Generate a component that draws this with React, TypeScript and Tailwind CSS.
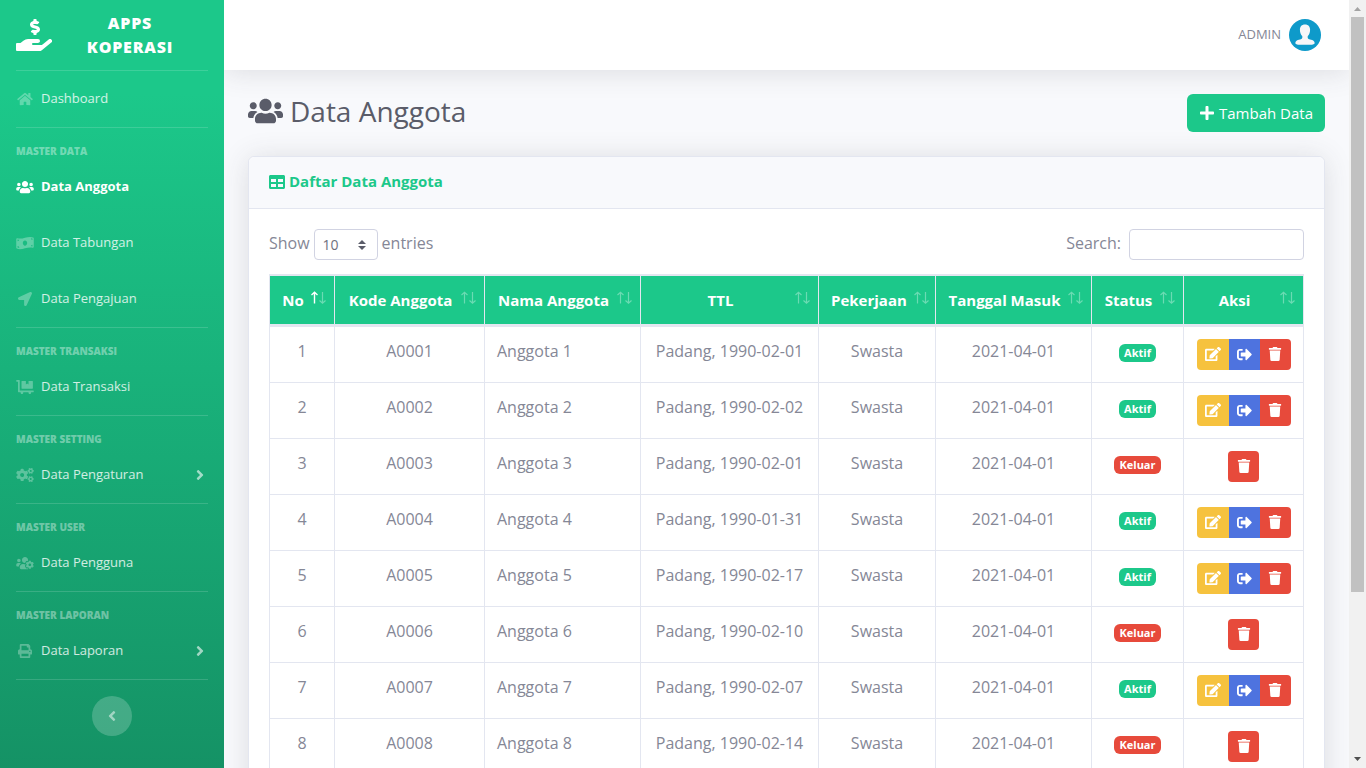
import type { ReactNode } from "react";
import type { IconType } from "react-icons";
import {
  FaAngleLeft,
  FaAngleRight,
  FaCogs,
  FaDollyFlatbed,
  FaEdit,
  FaHandHoldingUsd,
  FaHome,
  FaLocationArrow,
  FaMoneyBillWave,
  FaPlus,
  FaPrint,
  FaSignOutAlt,
  FaTable,
  FaTrash,
  FaUsers,
  FaUsersCog
} from "react-icons/fa";

interface NavItem {
  label: string;
  icon: IconType;
  active?: boolean;
  expandable?: boolean;
}

interface NavGroup {
  heading?: string;
  items: NavItem[];
}

interface Member {
  code: string;
  name: string;
  birth: string;
  active: boolean;
}

const navGroups: NavGroup[] = [
  { items: [{ label: "Dashboard", icon: FaHome }] },
  {
    heading: "Master Data",
    items: [
      { label: "Data Anggota", icon: FaUsers, active: true },
      { label: "Data Tabungan", icon: FaMoneyBillWave },
      { label: "Data Pengajuan", icon: FaLocationArrow }
    ]
  },
  { heading: "Master Transaksi", items: [{ label: "Data Transaksi", icon: FaDollyFlatbed }] },
  { heading: "Master Setting", items: [{ label: "Data Pengaturan", icon: FaCogs, expandable: true }] },
  { heading: "Master User", items: [{ label: "Data Pengguna", icon: FaUsersCog }] },
  { heading: "Master Laporan", items: [{ label: "Data Laporan", icon: FaPrint, expandable: true }] }
];

const columns = [
  { label: "No", width: "w-[65px]" },
  { label: "Kode Anggota", width: "w-[150px]" },
  { label: "Nama Anggota", width: "w-[156px]" },
  { label: "TTL", width: "w-[178px]" },
  { label: "Pekerjaan", width: "w-[117px]" },
  { label: "Tanggal Masuk", width: "w-[156px]" },
  { label: "Status", width: "w-[92px]" },
  { label: "Aksi", width: "w-[120px]" }
];

const members: Member[] = [
  { code: "A0001", name: "Anggota 1", birth: "Padang, 1990-02-01", active: true },
  { code: "A0002", name: "Anggota 2", birth: "Padang, 1990-02-02", active: true },
  { code: "A0003", name: "Anggota 3", birth: "Padang, 1990-02-01", active: false },
  { code: "A0004", name: "Anggota 4", birth: "Padang, 1990-01-31", active: true },
  { code: "A0005", name: "Anggota 5", birth: "Padang, 1990-02-17", active: true },
  { code: "A0006", name: "Anggota 6", birth: "Padang, 1990-02-10", active: false },
  { code: "A0007", name: "Anggota 7", birth: "Padang, 1990-02-07", active: true },
  { code: "A0008", name: "Anggota 8", birth: "Padang, 1990-02-14", active: false }
];

function Sidebar() {
  return (
    <nav className="relative z-10 w-56 shrink-0 bg-[linear-gradient(180deg,#1cc88a_10%,#13855c_100%)] text-white">
      <a href="#" className="flex h-[69px] items-center px-4">
        <FaHandHoldingUsd className="h-8 w-9 shrink-0" />
        <span className="flex-1 px-4 text-center text-base leading-6 font-extrabold tracking-wider uppercase">
          Apps Koperasi
        </span>
      </a>

      <div className="pt-px">
        {navGroups.map((group) => (
          <div key={group.items[0].label}>
            <hr className="mx-4 border-t border-white/15" />
            {group.heading && (
              <div className="mt-4 px-4 text-[10px] leading-[15px] font-extrabold text-white/40 uppercase">
                {group.heading}
              </div>
            )}
            <ul>
              {group.items.map((item) => (
                <li key={item.label}>
                  <a
                    href="#"
                    className={`flex h-14 items-center px-4 text-[13px] ${item.active ? "font-bold text-white" : "text-white/80"}`}
                  >
                    <item.icon className={`mr-[7px] h-[14px] w-[18px] ${item.active ? "" : "text-white/30"}`} />
                    <span className="flex-1">{item.label}</span>
                    {item.expandable && <FaAngleRight className="size-4 text-white/60" />}
                  </a>
                </li>
              ))}
            </ul>
          </div>
        ))}
      </div>

      <hr className="mx-4 border-t border-white/15" />
      <div className="mt-4 flex justify-center">
        <button
          aria-label="Toggle sidebar"
          className="flex size-10 items-center justify-center rounded-full bg-white/20 text-white/50"
        >
          <FaAngleLeft className="size-4" />
        </button>
      </div>
    </nav>
  );
}

function Avatar() {
  return (
    <svg viewBox="0 0 32 32" className="size-8" aria-hidden="true">
      <circle cx="16" cy="16" r="16" fill="#0e9aca" />
      <path
        d="M16 5.500c-3.400 0-5.100 2.200-5.100 5.300 0 2.800 1 5 2.300 6.300.4 1.500.1 2.700-1.300 3.200l-3 .8C7.300 21.600 6.500 22.700 6.300 24.200c.9 1 1.500 1.300 2.700 1.500h14c1.200-.2 1.800-.5 2.700-1.500-.2-1.500-1-2.600-2.600-3.100l-3-.8c-1.400-.5-1.700-1.700-1.300-3.200 1.300-1.300 2.300-3.500 2.300-6.300 0-3.100-1.700-5.300-5.100-5.300z"
        fill="#f6f6f8"
      />
    </svg>
  );
}

function Topbar() {
  return (
    <header className="flex h-[70px] items-center justify-end bg-white px-7 shadow-[0_2px_28px_0_rgba(58,59,69,0.15)]">
      <a href="#" className="flex items-center gap-2 text-[13px] text-[#858796]">
        ADMIN
        <Avatar />
      </a>
    </header>
  );
}

function SortArrows({ ascending }: { ascending: boolean }) {
  return (
    <svg viewBox="0 0 16 24" className="h-6 w-4 shrink-0" fill="none" stroke="currentColor" aria-hidden="true">
      <path
        d="M4.500 15.500V4.500M1.500 7l3-2.700 3 2.700"
        strokeWidth={ascending ? 1.4 : 1.2}
        opacity={ascending ? 1 : 0.35}
      />
      <path d="M12.500 4v11M9.500 12.500l3 2.700 3-2.700" strokeWidth={1.2} opacity="0.35" />
    </svg>
  );
}

function ActionButton({ label, color, children }: { label: string; color: string; children: ReactNode }) {
  return (
    <button
      aria-label={label}
      className={`flex h-[31px] min-w-[31px] items-center justify-center px-2 pb-px text-sm text-white first:rounded-l last:rounded-r ${color}`}
    >
      {children}
    </button>
  );
}

function MemberRow({ member, index }: { member: Member; index: number }) {
  return (
    <tr className="align-top *:border-r *:border-b *:border-[#e3e6f0] *:p-3">
      <td>{index + 1}</td>
      <td>{member.code}</td>
      <td className="text-left">{member.name}</td>
      <td>{member.birth}</td>
      <td>Swasta</td>
      <td>2021-04-01</td>
      <td>
        <span
          className={`inline-block rounded-md px-[5px] text-[11px] leading-[18px] font-bold text-white ${member.active ? "bg-[#1cc88a]" : "bg-[#e74a3b]"}`}
        >
          {member.active ? "Aktif" : "Keluar"}
        </span>
      </td>
      <td>
        <div className="flex justify-center">
          {member.active && (
            <>
              <ActionButton label="Edit" color="bg-[#f6c23e]">
                <FaEdit className="size-4" />
              </ActionButton>
              <ActionButton label="Keluar" color="bg-[#4e73df]">
                <FaSignOutAlt className="size-[15px]" />
              </ActionButton>
            </>
          )}
          <ActionButton label="Hapus" color="bg-[#e74a3b]">
            <FaTrash />
          </ActionButton>
        </div>
      </td>
    </tr>
  );
}

function MemberTable() {
  return (
    <table className="w-full table-fixed border-separate border-spacing-0 border-t border-l border-[#e3e6f0] text-center whitespace-nowrap">
      <thead>
        <tr>
          {columns.map((column, i) => (
            <th
              key={column.label}
              className={`border-t border-r border-b-[3px] border-[#e3e6f0] bg-[#1cc88a] p-0 text-[15px] font-bold text-white ${column.width}`}
            >
              <button className="flex h-12 w-full items-center pr-2 pl-3">
                <span className="flex-1">{column.label}</span>
                <span className="pl-1.5">
                  <SortArrows ascending={i === 0} />
                </span>
              </button>
            </th>
          ))}
        </tr>
      </thead>
      <tbody>
        {members.map((member, i) => (
          <MemberRow key={member.code} member={member} index={i} />
        ))}
      </tbody>
    </table>
  );
}

function PageScrollbar() {
  return (
    <div className="flex w-[17px] shrink-0 flex-col bg-[#f1f1f1]" aria-hidden="true">
      <svg viewBox="0 0 17 17" className="size-[17px]">
        <path d="M5 11l3.500-4 3.500 4z" fill="#a3a3a3" />
      </svg>
      <div className="mx-0.5 flex-[575] bg-[#c1c1c1]" />
      <div className="flex-[159]" />
      <svg viewBox="0 0 17 17" className="size-[17px]">
        <path d="M5 6l3.500 4 3.500-4z" fill="#505050" />
      </svg>
    </div>
  );
}

export default function App() {
  return (
    <div className="flex h-screen font-['Open_Sans',sans-serif] text-base text-[#858796]">
      <div className="min-w-0 flex-1 overflow-y-auto [scrollbar-width:none]">
        <div className="flex">
          <Sidebar />

          <div className="min-w-0 flex-1 bg-[#f8f9fc] pb-28">
            <Topbar />

            <main className="p-6">
              {/* Page heading */}
              <div className="mb-6 flex items-start justify-between">
                <h1 className="flex items-center gap-[7px] text-[28px] leading-[34px] text-[#5a5c69]">
                  <FaUsers className="h-7 w-[35px]" />
                  Data Anggota
                </h1>
                <a
                  href="#"
                  className="flex h-[38px] items-center gap-1 rounded-md bg-[#1cc88a] px-3 text-[15px] text-white"
                >
                  <FaPlus className="size-4" />
                  Tambah Data
                </a>
              </div>

              <section className="rounded-md border border-[#e3e6f0] bg-white shadow-[0_2px_28px_0_rgba(58,59,69,0.15)]">
                <h2 className="flex h-[52px] items-center gap-1 rounded-t-md border-b border-[#e3e6f0] bg-[#f8f9fc] px-5 pb-0.5 text-[15px] font-bold text-[#1cc88a]">
                  <FaTable className="size-4" />
                  Daftar Data Anggota
                </h2>

                <div className="p-5">
                  {/* Table controls */}
                  <div className="mb-[14px] flex items-center justify-between">
                    <label className="flex items-start gap-1">
                      <span className="leading-7">Show</span>
                      <span className="relative">
                        <select
                          defaultValue="10"
                          className="block h-[31px] w-16 appearance-none rounded border border-[#d1d3e2] bg-white px-2 text-sm text-[#6e707e]"
                        >
                          <option>10</option>
                          <option>25</option>
                          <option>50</option>
                          <option>100</option>
                        </select>
                        <svg
                          viewBox="0 0 8 10"
                          className="pointer-events-none absolute top-[11px] right-3 h-[10px] w-2"
                          aria-hidden="true"
                        >
                          <path d="M4 0L0 4h8zM4 10L0 6h8z" fill="#5a5c69" />
                        </svg>
                      </span>
                      <span className="leading-7">entries</span>
                    </label>
                    <label className="flex items-start gap-2">
                      <span className="leading-7">Search:</span>
                      <input
                        type="search"
                        className="h-[31px] w-[175px] appearance-none rounded border border-[#d1d3e2] bg-white px-2 text-sm text-[#6e707e]"
                      />
                    </label>
                  </div>

                  <MemberTable />
                </div>
              </section>
            </main>
          </div>
        </div>
      </div>

      <PageScrollbar />
    </div>
  );
}
